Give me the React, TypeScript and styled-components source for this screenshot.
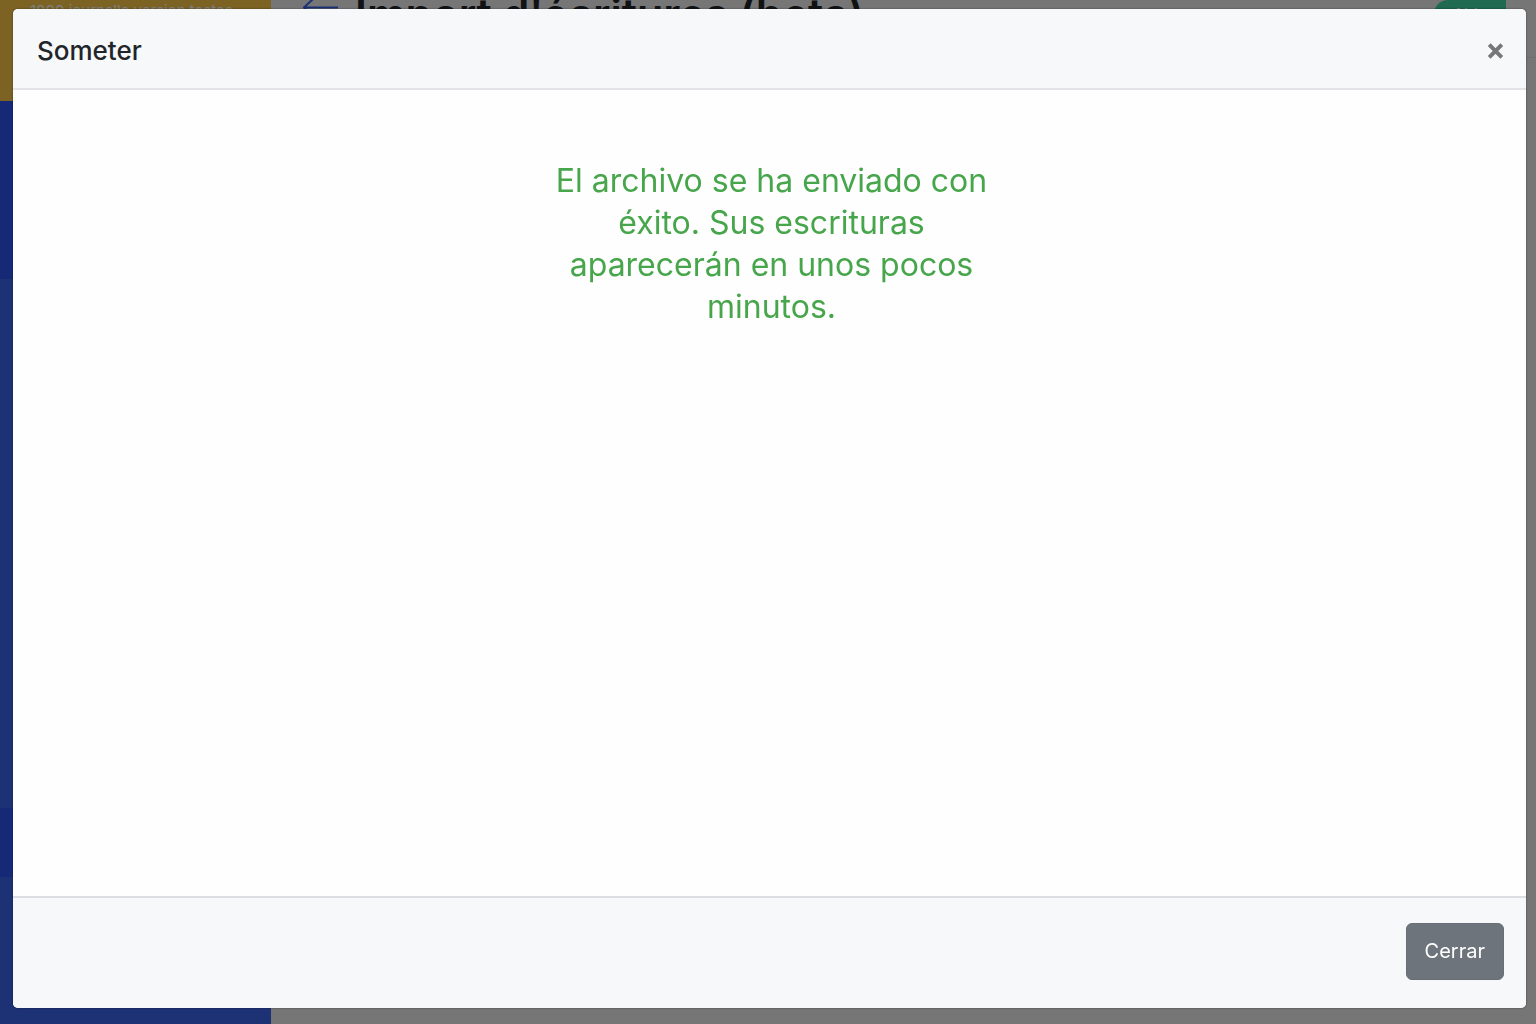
import React, { useState } from "react";
import styled, { createGlobalStyle } from "styled-components";

const GlobalStyle = createGlobalStyle`
  *, *::before, *::after { box-sizing: border-box; }
  body {
    margin: 0;
    font-family: Inter, "Liberation Sans", sans-serif;
    color: #212529;
    overflow: hidden;
  }
  h1, h2, p { margin: 0; }
`;

const Page = styled.div`
  display: grid;
  grid-template-columns: 271px 1fr;
  height: 100vh;
  overflow: hidden;
  background: #ececec;
`;

const Sidebar = styled.aside`
  display: grid;
  grid-template-rows: 101px 178px 1fr 69px 147px;
  background: #3a62ea;
`;

const Account = styled.div`
  background: #f8c646;
  color: #fff;
  font-size: 15px;
  line-height: 22px;
  padding: 0 30px;
  white-space: nowrap;
`;

const NavBlock = styled.div<{ $active?: boolean }>`
  background: ${(p) => (p.$active ? "#2a52ec" : "#3a62ea")};
`;

const TopBar = styled.header`
  display: flex;
  align-items: flex-start;
  gap: 16px;
  height: 58px;
  padding: 0 30px 0 32px;
  border-bottom: 1px solid #dedede;
`;

const PageTitle = styled.h1`
  flex: 1;
  font-size: 43px;
  line-height: 28px;
  font-weight: 600;
  white-space: nowrap;
`;

const HelpButton = styled.button`
  width: 72px;
  height: 28px;
  padding: 0;
  border: 0;
  border-radius: 14px 0 0 14px;
  background: #3ed4a0;
  color: #fff;
  font: 500 16px/24px Inter, "Liberation Sans", sans-serif;
`;

const Backdrop = styled.div`
  position: fixed;
  inset: 0;
  display: flex;
  padding: 9px 10px 16px 13px;
  background: rgba(0, 0, 0, 0.5);
`;

const Dialog = styled.section`
  flex: 1;
  display: flex;
  flex-direction: column;
  overflow: hidden;
  border-radius: 5px;
  background: #fefefe;
  box-shadow: 0 0 2px rgba(0, 0, 0, 0.5);
`;

const DialogHeader = styled.header`
  display: flex;
  align-items: center;
  justify-content: space-between;
  height: 81px;
  padding: 4px 20px 0 24px;
  background: #f7f8f9;
  border-bottom: 2px solid #e2e4e8;
`;

const DialogTitle = styled.h2`
  font-size: 26px;
  line-height: 32px;
  font-weight: 500;
`;

const CloseButton = styled.button`
  display: flex;
  padding: 0;
  border: 0;
  background: none;
  color: #777;
  cursor: pointer;
`;

const DialogBody = styled.div`
  flex: 1;
  display: flex;
  justify-content: center;
  align-items: flex-start;
  padding: 70px 24px 24px 28px;
`;

const Message = styled.p`
  width: 460px;
  color: #47a64b;
  font-size: 32px;
  line-height: 42px;
  text-align: center;
`;

const DialogFooter = styled.footer`
  display: flex;
  align-items: center;
  justify-content: flex-end;
  height: 112px;
  padding: 0 22px 4px;
  background: #f7f8f9;
  border-top: 2px solid #dbdee3;
`;

const DismissButton = styled.button`
  height: 57px;
  padding: 0 18px;
  border: 1px solid #686e76;
  border-radius: 6px;
  background: #6e747b;
  color: #fff;
  font: 400 20px/28px Inter, "Liberation Sans", sans-serif;
  cursor: pointer;
`;

export default function App() {
  const [open, setOpen] = useState(true);
  const close = () => setOpen(false);

  return (
    <>
      <GlobalStyle />
      <Page>
        <Sidebar>
          <Account>1000 journalle version testes</Account>
          <NavBlock $active />
          <NavBlock />
          <NavBlock $active />
          <NavBlock />
        </Sidebar>
        <main>
          <TopBar>
            <svg width="36" height="18" viewBox="0 0 36 18" fill="none" stroke="#3a62ea" strokeWidth="2" aria-hidden="true">
              <path d="M35 7.5H1M10-1 1 7.5 10 16" />
            </svg>
            <PageTitle>Import d'écritures (beta)</PageTitle>
            <HelpButton type="button">Aide</HelpButton>
          </TopBar>
        </main>
      </Page>
      {open && (
        <Backdrop>
          <Dialog role="dialog" aria-modal="true" aria-labelledby="dialog-title">
            <DialogHeader>
              <DialogTitle id="dialog-title">Someter</DialogTitle>
              <CloseButton type="button" aria-label="Cerrar ventana" onClick={close}>
                <svg width="20" height="20" viewBox="0 0 20 20" fill="none" stroke="currentColor" strokeWidth="4" aria-hidden="true">
                  <path d="M3.2 3.7 15.8 16.3M15.8 3.7 3.2 16.3" />
                </svg>
              </CloseButton>
            </DialogHeader>
            <DialogBody>
              <Message role="status">
                El archivo se ha enviado con éxito. Sus escrituras aparecerán en unos pocos minutos.
              </Message>
            </DialogBody>
            <DialogFooter>
              <DismissButton type="button" onClick={close}>Cerrar</DismissButton>
            </DialogFooter>
          </Dialog>
        </Backdrop>
      )}
    </>
  );
}
